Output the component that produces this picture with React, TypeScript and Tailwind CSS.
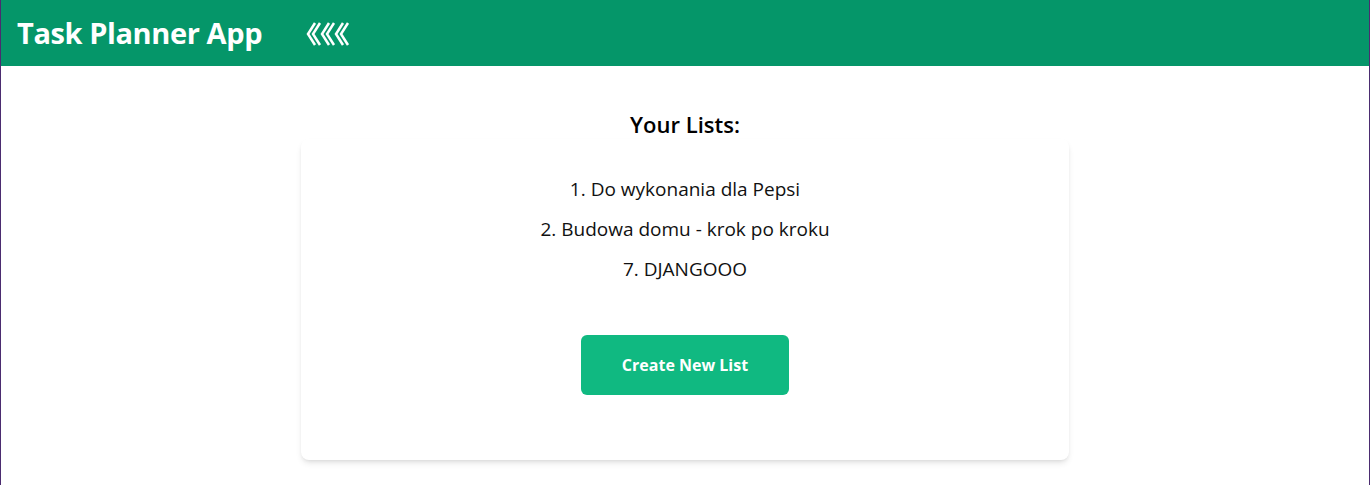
import React from 'react';

const lists = [
  { id: 1, name: 'Do wykonania dla Pepsi' },
  { id: 2, name: 'Budowa domu - krok po kroku' },
  { id: 7, name: 'DJANGOOO' },
];

function CollapseIcon() {
  return (
    <svg width="46" height="26" viewBox="0 0 46 26" fill="none" stroke="white" strokeWidth="2.5" strokeLinejoin="miter">
      {[0, 14, 28].map((x) => (
        <g key={x} transform={`translate(${x} 0)`}>
          <polyline points="9,2 2,13 9,24" />
          <polyline points="14,2 7,13 14,24" />
        </g>
      ))}
    </svg>
  );
}

export default function App() {
  return (
    <div
      className="min-h-screen bg-white border-l border-r border-[#4b2c70]"
      style={{ fontFamily: '"Open Sans", "Noto Sans", sans-serif' }}
    >
      <header className="h-[66px] bg-[#059669] flex items-center pl-4 text-white">
        <h1 className="text-[29px] font-bold tracking-[-0.4px]">Task Planner App</h1>
        <div className="ml-11 mt-0.5">
          <CollapseIcon />
        </div>
      </header>

      <main className="flex flex-col items-center pt-[43px]">
        <h2 className="text-[22px] font-semibold text-black leading-[30px]">Your Lists:</h2>
        <div className="w-[768px] bg-white rounded-lg shadow-md pt-[30px] pb-[65px] flex flex-col items-center">
          <ul className="text-center text-[19px] text-[#111]">
            {lists.map((l) => (
              <li key={l.id} className="leading-[40px]">
                {l.id}. {l.name}
              </li>
            ))}
          </ul>
          <button className="mt-[46px] w-[208px] h-[60px] rounded-md bg-[#10b981] text-white text-[16px] font-bold">
            Create New List
          </button>
        </div>
      </main>
    </div>
  );
}
